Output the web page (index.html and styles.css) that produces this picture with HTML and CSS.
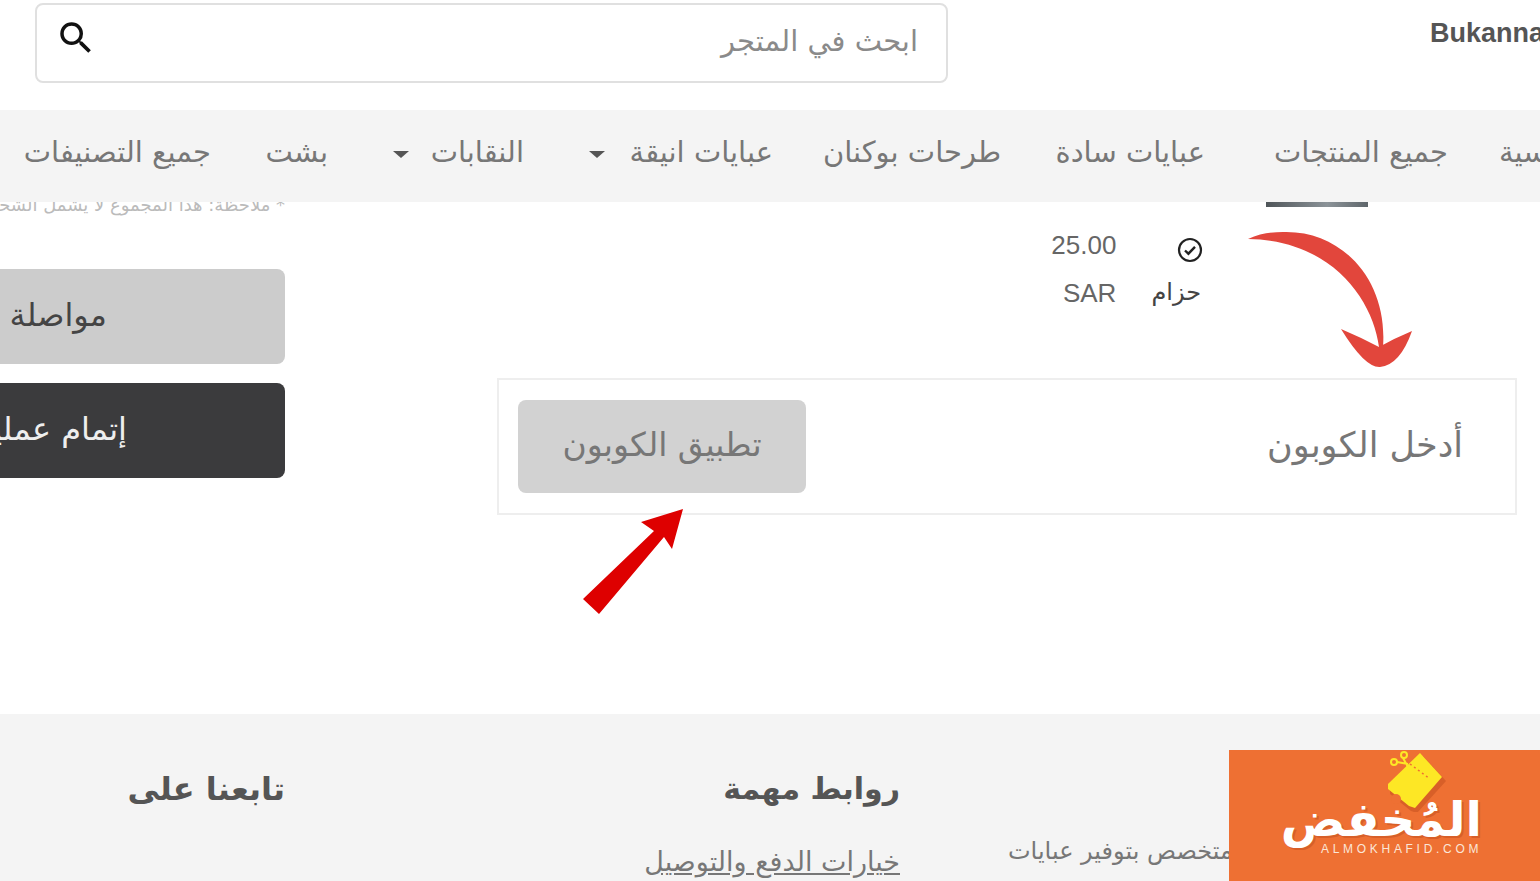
FILE: index.html
```html
<!DOCTYPE html>
<html lang="ar">
<head>
    <meta charset="UTF-8">
    <meta name="viewport" content="width=device-width, initial-scale=1.0">
    <title>تطبيق الكوبون</title>
    <link rel="stylesheet" href="styles.css">
</head>
<body>
    <div class="page">
        <header class="top-bar">
            <form class="search-box">
                <svg class="search-icon" viewBox="0 0 24 24" width="42" height="42"><path d="M15.5 14h-.79l-.28-.27A6.47 6.47 0 0 0 16 9.5 6.5 6.5 0 1 0 9.5 16c1.61 0 3.09-.59 4.23-1.57l.27.28v.79l5 4.99L20.49 19l-4.99-5zm-6 0C7.01 14 5 11.99 5 9.5S7.01 5 9.5 5 14 7.01 14 9.5 11.99 14 9.5 14z"/></svg>
                <span class="search-text">ابحث في المتجر</span>
            </form>
            <div class="brand">Bukannan</div>
        </header>

        <nav class="main-nav">
            <a class="nav-item">الصفحة الرئيسية</a>
            <a class="nav-item">جميع المنتجات</a>
            <a class="nav-item">عبايات سادة</a>
            <a class="nav-item">طرحات بوكنان</a>
            <a class="nav-item has-caret">عبايات انيقة</a>
            <a class="nav-item has-caret">النقابات</a>
            <a class="nav-item">بشت</a>
            <a class="nav-item">جميع التصنيفات</a>
        </nav>

        <main class="cart">
            <aside class="cart-side">
                <p class="cart-note">* ملاحظة: هذا المجموع لا يشمل الشحن</p>
                <a class="btn btn-light">مواصلة التسوق</a>
                <a class="btn btn-dark">إتمام عملية الشراء</a>
            </aside>
            <section class="cart-main">
                <div class="product-strip"></div>
                <div class="addon-row">
                    <div class="addon-name">
                        <svg class="check-icon" viewBox="0 0 26 26" width="26" height="26"><circle cx="13" cy="13" r="11" fill="none" stroke="#222" stroke-width="2.2"/><path d="M8 13.5l3.4 3.2L18 9.8" fill="none" stroke="#222" stroke-width="2.4"/></svg>
                        <span>حزام</span>
                    </div>
                    <div class="addon-price">
                        <span>25.00</span>
                        <span>SAR</span>
                    </div>
                </div>
                <div class="coupon-box">
                    <span class="coupon-label">أدخل الكوبون</span>
                    <button class="coupon-btn" type="button">تطبيق الكوبون</button>
                </div>
            </section>
        </main>

        <footer class="site-footer">
            <div class="footer-col">
                <h3 class="footer-title">تابعنا على</h3>
            </div>
            <div class="footer-col">
                <h3 class="footer-title title-small">روابط مهمة</h3>
                <a class="footer-link">خيارات الدفع والتوصيل</a>
            </div>
            <div class="footer-col footer-about">
                <p>متجر متخصص بتوفير عبايات</p>
            </div>
        </footer>

        <!-- annotations on top of the shot -->
        <svg class="arrow-curved" viewBox="0 0 180 150" width="180" height="150"><path fill="#e2463c" d="M8 14C20 8 32 7 43 7C102 5 148 55 143 122L139 122C133 75 92 15 8 14ZM101 104Q120 112 139 122Q155 113 172 106Q160 140 140 142Q125 143 101 104Z"/></svg>
        <svg class="arrow-straight" viewBox="0 0 110 115" width="110" height="115"><polygon fill="#de0000" points="103,9 61,22 74,31 3,99 19,114 84,37 92,49"/></svg>

        <div class="promo-logo">
            <svg class="promo-tag" viewBox="0 0 70 62" width="70" height="62"><path fill="#d85f28" d="M39 6l23 25-29 32-6-2-21-17 0-6z"/><path fill="#fde725" d="M36 3l22 24-27 31-6-2-21-17 0-5z"/><circle cx="12" cy="49" r="5" fill="#ee7033"/><path d="M22 11l24 18" stroke="#ee7033" stroke-width="1.5" stroke-dasharray="2 3"/><g fill="none" stroke="#fde725" stroke-width="2"><circle cx="20" cy="5" r="3"/><circle cx="10" cy="12" r="3"/><path d="M19 8l5 9M13 12l11 2"/></g></svg>
            <span class="promo-name">المُخفض</span>
            <span class="promo-url">ALMOKHAFID.COM</span>
        </div>
    </div>
</body>
</html>
```

FILE: styles.css
```css
* {
    box-sizing: border-box;
}

html, body {
    margin: 0;
    height: 100%;
    overflow: hidden;
}

body {
    font-family: "DejaVu Sans", sans-serif;
    background: #fff;
    color: #666;
}

.page {
    position: relative;
    height: 881px;
    overflow: hidden;
}

/* top bar */
.top-bar {
    height: 110px;
    padding: 3px 0 0 35px;
    display: flex;
    align-items: flex-start;
}

.search-box {
    flex: none;
    width: 913px;
    height: 80px;
    border: 2px solid #e0e0e0;
    border-radius: 8px;
    padding: 0 28px 0 18px;
    display: flex;
    align-items: center;
    justify-content: space-between;
}

.search-icon {
    margin-top: -10px;
    fill: #111;
}

.search-text {
    direction: rtl;
    font-size: 29px;
    color: #8a8a8a;
    margin-top: -4px;
}

.brand {
    flex: none;
    margin: 15px 0 0 482px;
    font-size: 27px;
    font-weight: bold;
    font-family: "Liberation Sans", sans-serif;
    color: #555;
    white-space: nowrap;
}

/* nav */
.main-nav {
    position: relative;
    z-index: 2;
    height: 92px;
    background: #f4f4f4;
    display: grid;
    grid-template-columns: 192px 184px 145px 169px 190px 137px 58px 198px;
    column-gap: 59px;
    align-items: center;
    margin-right: -159px;
    padding-bottom: 8px;
    direction: rtl;
}

.nav-item {
    font-size: 29px;
    color: #777;
    white-space: nowrap;
    display: flex;
    align-items: center;
    justify-content: space-between;
}

.has-caret {
    padding-left: 6px;
}

.has-caret::after {
    content: "";
    border-top: 7px solid #555;
    border-left: 8px solid transparent;
    border-right: 8px solid transparent;
    margin-top: 4px;
}

/* cart */
.cart {
    height: 512px;
    display: flex;
}

.cart-side {
    width: 285px;
    flex: none;
    direction: rtl;
    display: flex;
    flex-direction: column;
    gap: 19px;
}

.cart-note {
    margin: -10px 0 32px;
    font-size: 18px;
    line-height: 26px;
    color: #bbb;
    white-space: nowrap;
}

.btn {
    display: block;
    height: 95px;
    line-height: 92px;
    padding-right: 178px;
    border-radius: 0 8px 8px 0;
    font-size: 32px;
    white-space: nowrap;
}

.btn-light {
    background: #ccc;
    color: #444;
}

.btn-dark {
    padding-right: 158px;
    background: #3b3b3d;
    color: #eee;
}

.cart-main {
    width: 1020px;
    margin-left: 212px;
}

.product-strip {
    width: 102px;
    height: 5px;
    margin-left: 769px;
    background: linear-gradient(to right, #4f5559, #8b9398 60%, #5f666b);
}

.addon-row {
    height: 171px;
    padding: 19px 316px 0 0;
    display: flex;
    flex-direction: row-reverse;
    gap: 35px;
    direction: ltr;
}

.addon-name, .addon-price {
    display: flex;
    flex-direction: column;
    font-size: 24px;
    color: #444;
}

.addon-name {
    gap: 15px;
    padding-top: 11px;
    direction: rtl;
    align-items: flex-start;
}

.check-icon {
    margin-right: -2px;
}

.addon-price {
    align-items: flex-end;
    gap: 21px;
    padding-top: 6px;
    font-family: "Liberation Sans", sans-serif;
    font-size: 26px;
    line-height: 27px;
    color: #666;
}

.coupon-box {
    height: 137px;
    border: 2px solid #eee;
    padding: 0 52px 0 19px;
    display: flex;
    flex-direction: row-reverse;
    justify-content: space-between;
    align-items: center;
}

.coupon-label {
    direction: rtl;
    font-size: 35px;
    margin-top: -4px;
    color: #777;
}

.coupon-btn {
    width: 288px;
    height: 93px;
    border: none;
    border-radius: 8px;
    background: #d2d2d2;
    color: #777;
    font-family: inherit;
    font-size: 33px;
    direction: rtl;
    padding-bottom: 6px;
}

/* footer */
.site-footer {
    height: 167px;
    background: #f4f4f4;
    display: grid;
    grid-template-columns: 285px 615px 640px;
}

.footer-col {
    direction: rtl;
    padding-top: 50px;
}

.footer-title {
    margin: 0;
    font-size: 32px;
    line-height: 50px;
    color: #555;
}

.title-small {
    font-size: 30px;
}

.footer-link {
    display: block;
    margin-top: 33px;
    font-size: 27px;
    line-height: 30px;
    color: #777;
    text-decoration: underline;
    white-space: nowrap;
}

.footer-about {
    padding: 0;
}

.footer-about p {
    margin: 122px 0 0;
    padding-left: 108px;
    font-size: 24px;
    line-height: 30px;
    color: #777;
    text-align: left;
    white-space: nowrap;
}

/* overlays */
.arrow-curved {
    position: absolute;
    left: 1240px;
    top: 225px;
    z-index: 3;
}

.arrow-straight {
    position: absolute;
    left: 580px;
    top: 500px;
    z-index: 3;
}

.promo-logo {
    position: absolute;
    left: 1229px;
    top: 750px;
    width: 311px;
    height: 131px;
    z-index: 4;
    background: #ee7033;
    overflow: hidden;
}

.promo-tag {
    position: absolute;
    left: 155px;
    top: 0;
}

.promo-name {
    position: absolute;
    right: 58px;
    top: 24px;
    direction: rtl;
    font-size: 48px;
    line-height: 90px;
    font-weight: bold;
    color: #fff;
    text-shadow: 2px 2px 0 #d85f28;
    white-space: nowrap;
}

.promo-url {
    position: absolute;
    left: 92px;
    top: 92px;
    font-family: "Liberation Sans", sans-serif;
    font-size: 12px;
    line-height: 14px;
    letter-spacing: 3.7px;
    color: #fbe6d8;
    white-space: nowrap;
}
```
